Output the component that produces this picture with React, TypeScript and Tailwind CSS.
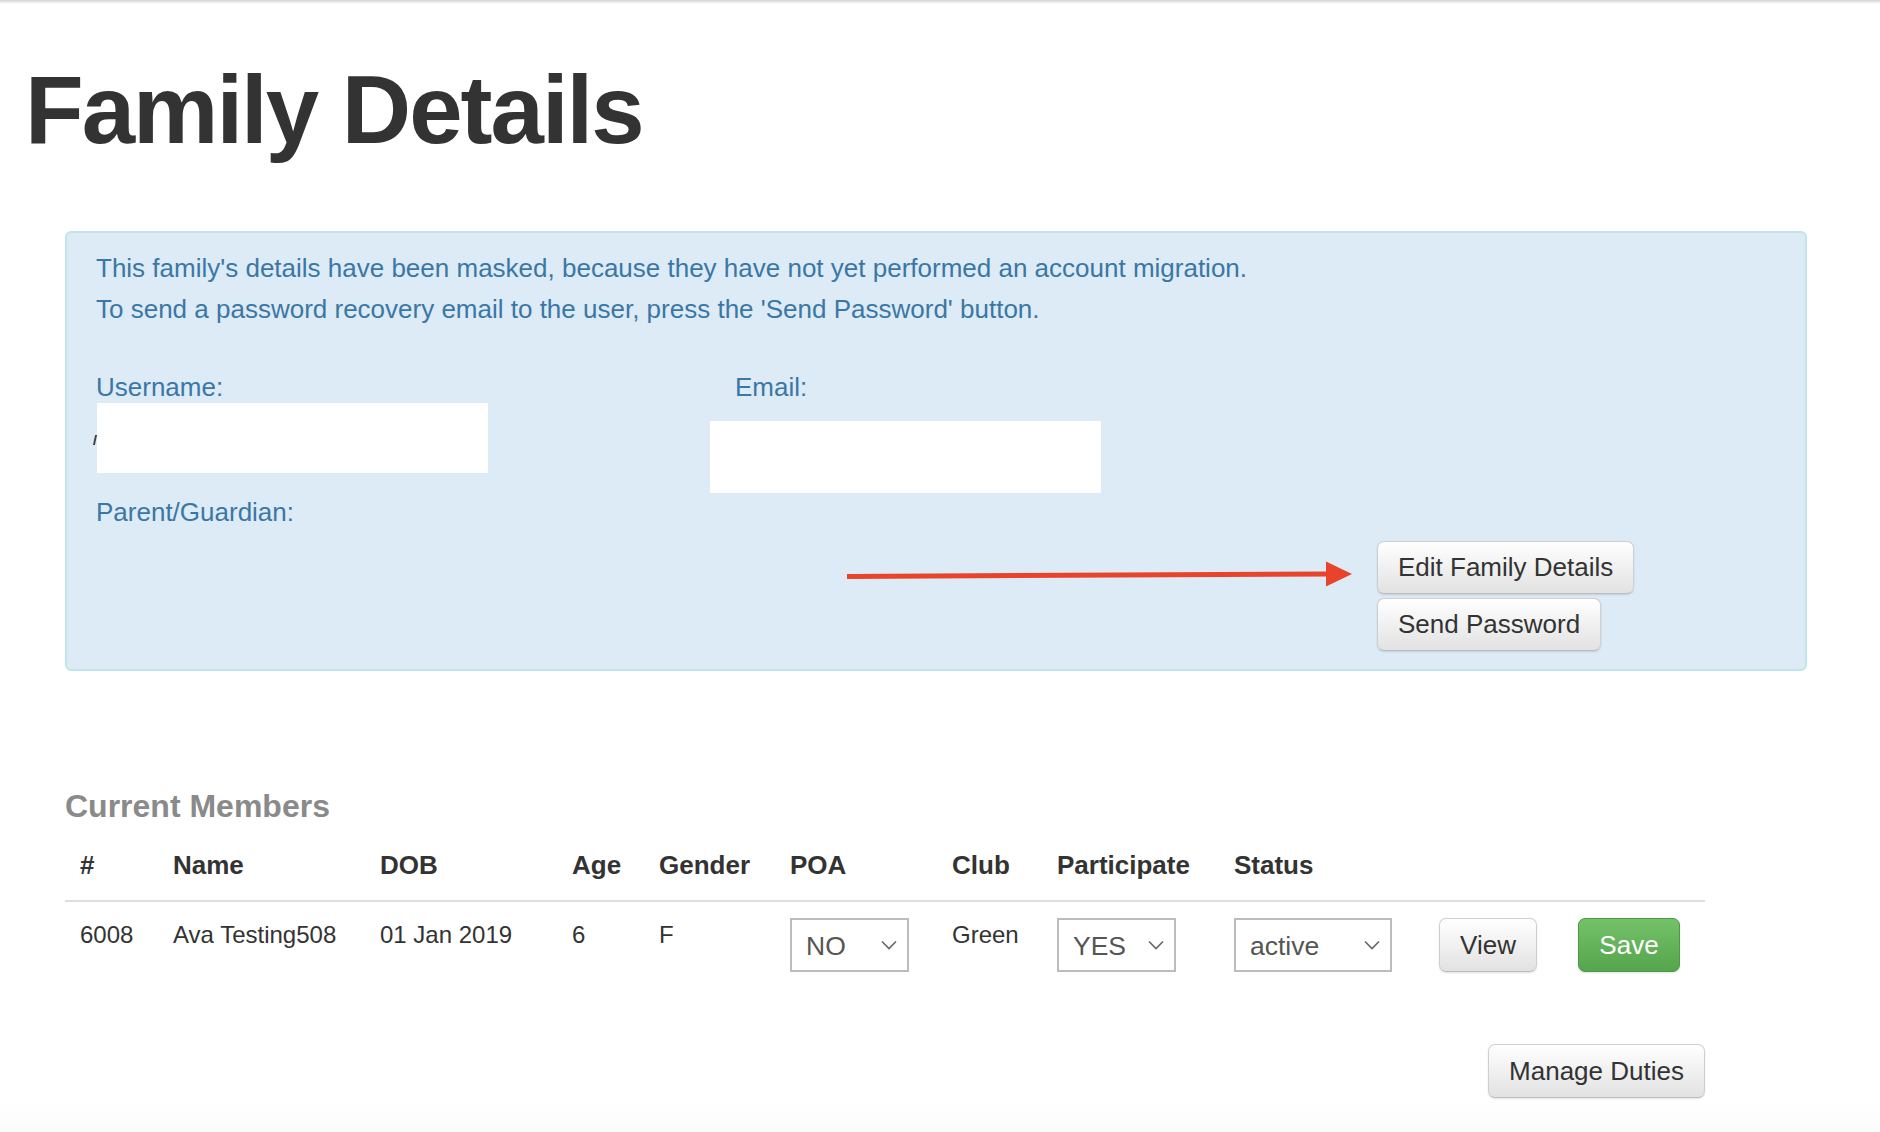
import type { ReactNode } from 'react'

type Member = {
  id: string
  name: string
  dob: string
  age: string
  gender: string
  poa: string
  club: string
  participate: string
  status: string
}

const members: Member[] = [
  {
    id: '6008',
    name: 'Ava Testing508',
    dob: '01 Jan 2019',
    age: '6',
    gender: 'F',
    poa: 'NO',
    club: 'Green',
    participate: 'YES',
    status: 'active',
  },
]

function Button({
  children,
  variant = 'default',
  className = '',
}: {
  children: ReactNode
  variant?: 'default' | 'success'
  className?: string
}) {
  const look =
    variant === 'success'
      ? 'bg-linear-to-b from-[#74c16a] to-[#55a54d] border-[#4d9a46] text-white'
      : 'bg-linear-to-b from-white to-[#e2e2e2] border-[#cfcfcf] border-b-[#bdbdbd] text-[#333]'
  return (
    <button
      type="button"
      className={`h-[53px] rounded-[7px] border px-[20px] text-[26px] leading-none shadow-[0_1px_2px_rgba(0,0,0,0.12)] ${look} ${className}`}
    >
      {children}
    </button>
  )
}

function FakeSelect({ value, width }: { value: string; width: string }) {
  return (
    <div
      className={`flex h-[54px] items-center justify-between border-2 border-[#bcbcbc] bg-white pl-[14px] pr-[10px] ${width}`}
    >
      <span className="pt-[2px] text-[26.5px] text-[#555]">{value}</span>
      <svg width="16" height="10" viewBox="0 0 16 10" fill="none">
        <path d="M1 1.5 8 8.5 15 1.5" stroke="#666" strokeWidth="1.6" />
      </svg>
    </div>
  )
}

function Arrow() {
  return (
    <svg width="506" height="40" viewBox="0 0 506 40" className="shrink-0">
      <path d="M0 21.5 L482 19" stroke="#e8432b" strokeWidth="5" />
      <path d="M479 6.5 L505 19 L479 31.5 Z" fill="#e8432b" />
    </svg>
  )
}

export default function App() {
  return (
    <div className="relative min-h-[1132px] overflow-hidden bg-white font-['Liberation_Sans',Arial,sans-serif] text-[24px] text-[#333]">
      <div className="h-[4px] bg-linear-to-b from-[#d4d4d4] to-white" />

      <h1 className="ml-[25px] mt-[53px] text-[96px] font-bold leading-[1.1] tracking-[-2px] text-[#333]">
        Family Details
      </h1>

      <div className="pl-[65px]">
        {/* masked account notice */}
        <div className="mt-[68px] w-[1742px] rounded-[6px] border-2 border-[#c4e3ef] bg-[#dcebf6] pb-[18px] pl-[29px] pt-[15px] text-[26px] text-[#3b77a5]">
          <p className="leading-[41px]">
            This family's details have been masked, because they have not yet performed an account
            migration.
            <br />
            To send a password recovery email to the user, press the 'Send Password' button.
          </p>

          <div className="mt-[37px] flex">
            <div className="w-[614px]">
              <div className="leading-[41px]">Username:</div>
              <div className="relative -mt-[5px] ml-[1px]">
                <span className="absolute -left-[3px] top-[32px] h-[10px] w-[2px] -skew-x-12 bg-[#444]" />
                <div className="h-[70px] w-[391px] bg-white" />
              </div>
              <div className="mt-[19px] leading-[41px]">Parent/Guardian:</div>
            </div>
            <div>
              <div className="ml-[25px] leading-[41px]">Email:</div>
              <div className="mt-[13px] h-[72px] w-[391px] bg-white" />
            </div>
          </div>

          <div className="mt-[8px] flex">
            <div className="ml-[751px] mt-[14px] h-[40px]">
              <Arrow />
            </div>
            <div className="ml-[24px] flex flex-col items-start gap-[4px]">
              <Button>Edit Family Details</Button>
              <Button>Send Password</Button>
            </div>
          </div>
        </div>

        <h4 className="mt-[118px] text-[32px] font-bold leading-[34px] text-[#8a8a8a]">
          Current Members
        </h4>

        <table className="mt-[10px] w-[1640px] table-fixed border-collapse">
          <colgroup>
            <col className="w-[93px]" />
            <col className="w-[207px]" />
            <col className="w-[192px]" />
            <col className="w-[87px]" />
            <col className="w-[131px]" />
            <col className="w-[162px]" />
            <col className="w-[105px]" />
            <col className="w-[177px]" />
            <col className="w-[205px]" />
            <col className="w-[139px]" />
            <col className="w-[142px]" />
          </colgroup>
          <thead>
            <tr className="border-b-2 border-[#dddddd] text-left text-[26px] leading-[34px]">
              <th className="px-[15px] pb-[18px] pt-[15px] font-bold">#</th>
              <th className="px-[15px] pb-[18px] pt-[15px] font-bold">Name</th>
              <th className="px-[15px] pb-[18px] pt-[15px] font-bold">DOB</th>
              <th className="px-[15px] pb-[18px] pt-[15px] font-bold">Age</th>
              <th className="px-[15px] pb-[18px] pt-[15px] font-bold">Gender</th>
              <th className="px-[15px] pb-[18px] pt-[15px] font-bold">POA</th>
              <th className="px-[15px] pb-[18px] pt-[15px] font-bold">Club</th>
              <th className="px-[15px] pb-[18px] pt-[15px] font-bold">Participate</th>
              <th className="px-[15px] pb-[18px] pt-[15px] font-bold">Status</th>
              <th className="px-[15px] pb-[18px] pt-[15px]" />
              <th className="px-[15px] pb-[18px] pt-[15px]" />
            </tr>
          </thead>
          <tbody>
            {members.map((m) => (
              <tr key={m.id} className="align-top text-[24px] leading-[34px]">
                <td className="px-[15px] pb-[15px] pt-[16px]">{m.id}</td>
                <td className="px-[15px] pb-[15px] pt-[16px] whitespace-nowrap">{m.name}</td>
                <td className="px-[15px] pb-[15px] pt-[16px] whitespace-nowrap">{m.dob}</td>
                <td className="px-[15px] pb-[15px] pt-[16px]">{m.age}</td>
                <td className="px-[15px] pb-[15px] pt-[16px]">{m.gender}</td>
                <td className="px-[15px] pb-[15px] pt-[16px]">
                  <FakeSelect value={m.poa} width="w-[119px]" />
                </td>
                <td className="px-[15px] pb-[15px] pt-[16px]">{m.club}</td>
                <td className="px-[15px] pb-[15px] pt-[16px]">
                  <FakeSelect value={m.participate} width="w-[119px]" />
                </td>
                <td className="px-[15px] pb-[15px] pt-[16px]">
                  <FakeSelect value={m.status} width="w-[158px]" />
                </td>
                <td className="px-[15px] pb-[15px] pt-[16px]">
                  <Button className="h-[54px] w-[98px] px-0">View</Button>
                </td>
                <td className="px-[15px] pb-[15px] pt-[16px]">
                  <Button variant="success" className="h-[54px] w-[102px] px-0">
                    Save
                  </Button>
                </td>
              </tr>
            ))}
          </tbody>
        </table>

        <div className="mt-[57px] flex w-[1640px] justify-end">
          <Button className="h-[54px] w-[217px] px-0">Manage Duties</Button>
        </div>
      </div>

      <div className="absolute inset-x-0 bottom-0 h-[30px] bg-linear-to-b from-white to-[#fbfbfb]" />
    </div>
  )
}
